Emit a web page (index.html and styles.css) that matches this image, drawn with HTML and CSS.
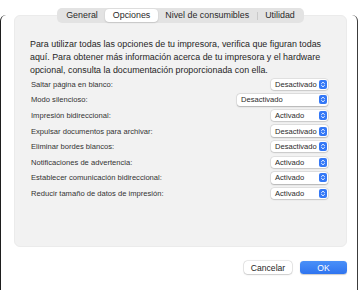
FILE: index.html
```html
<!DOCTYPE html>
<html lang="es">
<head>
    <meta charset="UTF-8">
    <meta name="viewport" content="width=device-width, initial-scale=1.0">
    <title>Opciones de impresora</title>
    <link rel="stylesheet" href="styles.css">
</head>
<body>
    <div class="window">
        <div class="panel">
            <div class="tabs">
                <span class="tab">General</span>
                <span class="tab tab-active">Opciones</span>
                <span class="tab">Nivel de consumibles</span>
                <span class="tab-sep"></span>
                <span class="tab">Utilidad</span>
            </div>
            <p class="intro">Para utilizar todas las opciones de tu impresora, verifica que figuran todas aquí. Para obtener más información acerca de tu impresora y el hardware opcional, consulta la documentación proporcionada con ella.</p>
            <div class="options">
                <div class="opt-row">
                    <span class="opt-lbl">Saltar página en blanco:</span>
                    <span class="popup"><span>Desactivado</span><svg class="stepper" viewBox="0 0 8 9"><rect width="8" height="9" rx="2"/><path d="M2.5 3.6 4 2.2 5.5 3.6M2.5 5.4 4 6.8 5.5 5.4"/></svg></span>
                </div>
                <div class="opt-row">
                    <span class="opt-lbl">Modo silencioso:</span>
                    <span class="popup popup-wide"><span>Desactivado</span><svg class="stepper" viewBox="0 0 8 9"><rect width="8" height="9" rx="2"/><path d="M2.5 3.6 4 2.2 5.5 3.6M2.5 5.4 4 6.8 5.5 5.4"/></svg></span>
                </div>
                <div class="opt-row">
                    <span class="opt-lbl">Impresión bidireccional:</span>
                    <span class="popup"><span>Activado</span><svg class="stepper" viewBox="0 0 8 9"><rect width="8" height="9" rx="2"/><path d="M2.5 3.6 4 2.2 5.5 3.6M2.5 5.4 4 6.8 5.5 5.4"/></svg></span>
                </div>
                <div class="opt-row">
                    <span class="opt-lbl">Expulsar documentos para archivar:</span>
                    <span class="popup"><span>Desactivado</span><svg class="stepper" viewBox="0 0 8 9"><rect width="8" height="9" rx="2"/><path d="M2.5 3.6 4 2.2 5.5 3.6M2.5 5.4 4 6.8 5.5 5.4"/></svg></span>
                </div>
                <div class="opt-row">
                    <span class="opt-lbl">Eliminar bordes blancos:</span>
                    <span class="popup"><span>Desactivado</span><svg class="stepper" viewBox="0 0 8 9"><rect width="8" height="9" rx="2"/><path d="M2.5 3.6 4 2.2 5.5 3.6M2.5 5.4 4 6.8 5.5 5.4"/></svg></span>
                </div>
                <div class="opt-row">
                    <span class="opt-lbl">Notificaciones de advertencia:</span>
                    <span class="popup"><span>Activado</span><svg class="stepper" viewBox="0 0 8 9"><rect width="8" height="9" rx="2"/><path d="M2.5 3.6 4 2.2 5.5 3.6M2.5 5.4 4 6.8 5.5 5.4"/></svg></span>
                </div>
                <div class="opt-row">
                    <span class="opt-lbl">Establecer comunicación bidireccional:</span>
                    <span class="popup"><span>Activado</span><svg class="stepper" viewBox="0 0 8 9"><rect width="8" height="9" rx="2"/><path d="M2.5 3.6 4 2.2 5.5 3.6M2.5 5.4 4 6.8 5.5 5.4"/></svg></span>
                </div>
                <div class="opt-row">
                    <span class="opt-lbl">Reducir tamaño de datos de impresión:</span>
                    <span class="popup"><span>Activado</span><svg class="stepper" viewBox="0 0 8 9"><rect width="8" height="9" rx="2"/><path d="M2.5 3.6 4 2.2 5.5 3.6M2.5 5.4 4 6.8 5.5 5.4"/></svg></span>
                </div>
            </div>
        </div>
        <div class="actions">
            <button class="btn btn-cancel" type="button">Cancelar</button>
            <button class="btn btn-ok" type="button">OK</button>
        </div>
    </div>
</body>
</html>
```

FILE: styles.css
```css
*, *:before, *:after {
    margin: 0;
    padding: 0;
    box-sizing: border-box;
}
html, body {
    background: #fff;
    overflow: hidden;
}
body {
    font-family: 'Liberation Sans', Arial, sans-serif;
    color: #262626;
}
.window {
    width: 358px;
    height: 289px;
    background: #fff;
    border-left: 1px solid #1e1e1e;
    border-right: 1px solid #3c3c3c;
    border-bottom: 2px solid #a0a0a0;
    border-radius: 6px 6px 9px 9px;
}
.panel {
    height: 232px;
    margin: 15px 10px 0 13px;
    padding: 0 15px;
    background: #f2f2f2;
    border: 1px solid #ebebeb;
    border-radius: 6px;
}
.tabs {
    display: flex;
    align-items: center;
    width: max-content;
    height: 15px;
    margin: -8px auto 0;
    padding: 0 1.5px;
    background: #e3e3e3;
    border-radius: 5px;
    font-size: 8.9px;
    color: #2a2a2a;
}
.tab {
    padding: 0 7.5px;
    line-height: 13px;
    border-radius: 4px;
}
.tab-active {
    background: #fff;
    box-shadow: 0 0.5px 1.5px rgba(0, 0, 0, 0.22);
}
.tab-sep {
    width: 1px;
    height: 8px;
    background: #c9c9c9;
}
.intro {
    margin-top: 14.5px;
    font-size: 8.9px;
    line-height: 13px;
}
.options {
    padding-right: 3px;
}
.opt-row {
    display: flex;
    justify-content: space-between;
    align-items: center;
    height: 15.6px;
}
.opt-lbl {
    font-size: 7.6px;
    color: #333;
    padding-left: 1px;
}
.popup {
    display: flex;
    justify-content: space-between;
    align-items: center;
    width: 57px;
    height: 11.5px;
    padding: 0 1px 0 4px;
    background: #fff;
    border-radius: 3px;
    box-shadow: 0 0 0 0.5px rgba(0, 0, 0, 0.1), 0 0.5px 1.5px rgba(0, 0, 0, 0.22);
    font-size: 7.6px;
    color: #2a2a2a;
}
.popup-wide {
    width: 91px;
}
.stepper {
    width: 8px;
    height: 9px;
}
.stepper rect {
    fill: #3478f6;
}
.stepper path {
    fill: none;
    stroke: #fff;
    stroke-width: 0.9;
    stroke-linecap: round;
    stroke-linejoin: round;
}
.actions {
    display: flex;
    justify-content: flex-end;
    gap: 8px;
    margin-top: 14px;
    padding-right: 10px;
}
.btn {
    height: 13px;
    border: none;
    border-radius: 3.5px;
    font-family: 'Liberation Sans', Arial, sans-serif;
    font-size: 8.6px;
    cursor: pointer;
}
.btn-cancel {
    width: 48px;
    background: #fff;
    color: #262626;
    box-shadow: 0 0 0 0.5px rgba(0, 0, 0, 0.12), 0 0.5px 1.5px rgba(0, 0, 0, 0.25);
}
.btn-ok {
    width: 47px;
    background: linear-gradient(#4a90f8, #2f74ef);
    color: #fff;
    box-shadow: 0 0.5px 1px rgba(0, 0, 0, 0.2);
}
```
